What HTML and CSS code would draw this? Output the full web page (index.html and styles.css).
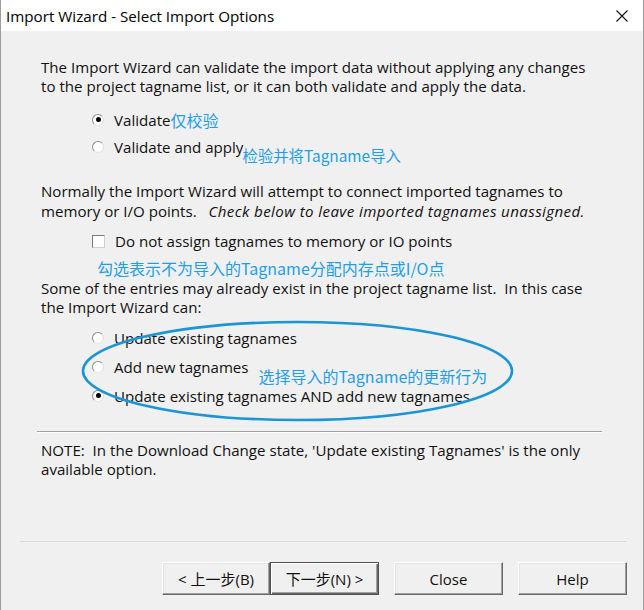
FILE: index.html
```html
<!DOCTYPE html>
<html>
<head>
<meta charset="utf-8">
<link rel="stylesheet" href="styles.css">
</head>
<body>
<div class="window">
  <div class="titlebar">
    <span class="title">Import Wizard - Select Import Options</span>
    <svg class="close" width="12" height="12" viewBox="0 0 12 12"><path d="M0.5 0.5 L11.5 11.5 M11.5 0.5 L0.5 11.5" stroke="#111" stroke-width="1.1" fill="none"/></svg>
  </div>
  <div class="content">
    <p class="para p1">The Import Wizard can validate the import data without applying any changes<br>to the project tagname list, or it can both validate and apply the data.</p>
    <div class="options opt1">
      <div class="row"><span class="radio checked"></span><span class="label">Validate</span><span class="anno">仅校验</span></div>
      <div class="row"><span class="radio"></span><span class="label">Validate and apply</span><span class="anno low">检验并将Tagname导入</span></div>
    </div>
    <p class="para p2">Normally the Import Wizard will attempt to connect imported tagnames to<br>memory or I/O points. &nbsp; <i class="hint">Check below to leave imported tagnames unassigned.</i></p>
    <div class="checkrow"><span class="checkbox"></span><span class="label">Do not assign tagnames to memory or IO points</span></div>
    <div class="anno block">勾选表示不为导入的Tagname分配内存点或I/O点</div>
    <p class="para p3">Some of the entries may already exist in the project tagname list. &nbsp;In this case<br>the Import Wizard can:</p>
    <div class="options opt2">
      <div class="row"><span class="radio"></span><span class="label">Update existing tagnames</span></div>
      <div class="row"><span class="radio"></span><span class="label">Add new tagnames</span><span class="anno low2">选择导入的Tagname的更新行为</span></div>
      <div class="row"><span class="radio checked"></span><span class="label">Update existing tagnames AND add new tagnames</span></div>
      <svg class="ellipse" width="440" height="104" viewBox="0 0 440 104"><ellipse cx="219.5" cy="52" rx="214.5" ry="49" fill="none" stroke="#1b95d6" stroke-width="2.6"/></svg>
    </div>
    <div class="sep"></div>
    <p class="para p4">NOTE: &nbsp;In the Download Change state, 'Update existing Tagnames' is the only<br>available option.</p>
  </div>
  <div class="footer">
    <button class="btn back">&lt; 上一步(B)</button>
    <button class="btn next">下一步(N) &gt;</button>
    <button class="btn close-btn">Close</button>
    <button class="btn help">Help</button>
  </div>
</div>
</body>
</html>
```

FILE: styles.css
```css
html, body {
  margin: 0;
  padding: 0;
  background: #f0f0f0;
}
.window {
  width: 644px;
  height: 610px;
  box-sizing: border-box;
  border-left: 1px solid #9c9c9c;
  border-right: 1px solid #9c9c9c;
  display: flex;
  flex-direction: column;
  font-family: "Open Sans", "Noto Sans CJK SC", sans-serif;
  font-size: 15.1px;
  color: #111;
  background: #f0f0f0;
}
.titlebar {
  height: 31px;
  background: #fff;
  display: flex;
  align-items: center;
  justify-content: space-between;
  padding: 0 15px 0 5px;
  flex: none;
}
.title {
  font-size: 15.2px;
  color: #000;
}
.close {
  display: block;
}
.content {
  flex: 1;
  padding: 0 40px;
  position: relative;
}
.para {
  margin: 0;
  line-height: 19px;
  white-space: nowrap;
}
.p1 { margin-top: 27px; }
.p2 { margin-top: 21px; line-height: 20px; }
.p3 { margin-top: 1px; }
.p4 { margin-top: 8px; }
.hint {
  letter-spacing: 0.4px;
}
.options {
  margin-left: 51px;
  position: relative;
}
.opt1 { margin-top: 10px; }
.opt1 .row { height: 27px; }
.opt2 { margin-top: 6px; }
.opt2 .row { height: 29px; }
.row, .checkrow {
  display: flex;
  align-items: center;
  white-space: nowrap;
}
.radio {
  width: 12px;
  height: 12px;
  box-sizing: border-box;
  border-radius: 50%;
  background: #fff;
  border: 1px solid;
  border-color: #8c8c8c #dcdcdc #e6e6e6 #8c8c8c;
  position: relative;
  flex: none;
  margin-right: 10px;
}
.radio.checked::after {
  content: "";
  position: absolute;
  left: 2.5px;
  top: 2.5px;
  width: 5px;
  height: 5px;
  border-radius: 50%;
  background: #000;
}
.checkrow {
  margin-top: 10px;
  margin-left: 51px;
  height: 20px;
}
.checkbox {
  width: 13px;
  height: 13px;
  box-sizing: border-box;
  background: #fff;
  border: 1px solid;
  border-color: #7a7a7a #cfcfcf #cfcfcf #7a7a7a;
  margin-right: 10px;
  flex: none;
}
.anno {
  font-family: "Noto Sans CJK SC", sans-serif;
  color: #1e9ee6;
  font-size: 16px;
}
.anno.low {
  position: relative;
  top: 8px;
  margin-left: -1px;
  font-size: 15.4px;
}
.anno.low2 {
  margin-left: 10px;
  position: relative;
  top: 9px;
}
.anno.block {
  margin-top: 7px;
  margin-left: 56px;
  height: 20px;
  line-height: 20px;
  font-size: 16px;
}
.ellipse {
  position: absolute;
  left: -14px;
  top: -4px;
  pointer-events: none;
}
.sep {
  margin-top: 21px;
  margin-left: -4px;
  width: 565px;
  height: 1px;
  background: #a0a0a0;
  border-bottom: 1px solid #fff;
}
.footer {
  flex: none;
  margin: 0 16px 0 19px;
  border-top: 1px solid #dadada;
  padding: 20px 0 15px;
  display: flex;
  justify-content: flex-end;
}
.btn {
  width: 109px;
  height: 33px;
  box-sizing: border-box;
  font-family: "Open Sans", "Noto Sans CJK SC", sans-serif;
  font-size: 15px;
  color: #111;
  background: #f0f0f0;
  border: 1px solid;
  border-color: #fff #696969 #696969 #fff;
  box-shadow: inset -1px -1px 0 #a0a0a0, inset 1px 1px 0 #e3e3e3;
  padding: 0;
  margin: 0;
}
.back { width: 108px; }
.next {
  border: 1px solid #505050;
  box-shadow: inset 1px 1px 0 #fff, inset -1px -1px 0 #696969, inset -2px -2px 0 #a0a0a0;
  margin-right: 15px;
}
.close-btn { margin-right: 15px; }
```
